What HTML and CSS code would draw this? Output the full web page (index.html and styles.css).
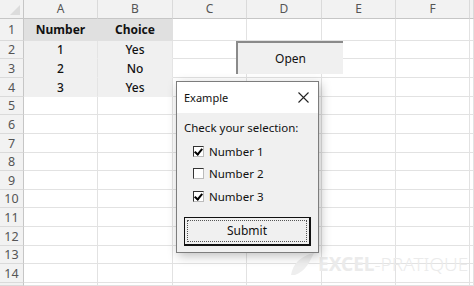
FILE: index.html
```html
<!DOCTYPE html>
<html lang="en">
<head>
  <meta charset="UTF-8" />
  <title>Example</title>
  <link rel="stylesheet" href="styles.css">
</head>
<body>
  <div class="sheet">
    <div class="corner"></div>
    <div class="col-head">A</div>
    <div class="col-head">B</div>
    <div class="col-head">C</div>
    <div class="col-head">D</div>
    <div class="col-head">E</div>
    <div class="col-head">F</div>
    <div class="col-head"></div>

    <div class="row-head">1</div>
    <div class="cell title">Number</div>
    <div class="cell title">Choice</div>
    <div class="cell"></div><div class="cell"></div><div class="cell"></div><div class="cell"></div><div class="cell"></div>

    <div class="row-head">2</div>
    <div class="cell data">1</div>
    <div class="cell data">Yes</div>
    <div class="cell"></div><div class="cell"></div><div class="cell"></div><div class="cell"></div><div class="cell"></div>

    <div class="row-head">3</div>
    <div class="cell data">2</div>
    <div class="cell data">No</div>
    <div class="cell"></div><div class="cell"></div><div class="cell"></div><div class="cell"></div><div class="cell"></div>

    <div class="row-head">4</div>
    <div class="cell data">3</div>
    <div class="cell data">Yes</div>
    <div class="cell"></div><div class="cell"></div><div class="cell"></div><div class="cell"></div><div class="cell"></div>
  </div>

  <div class="watermark">
    <svg class="wm-logo" width="28" height="24" viewBox="0 0 28 24">
      <path d="M3 23 C5 12 12 4 26 1 C22 9 18 19 7 23 Z" fill="#eeeeee"/>
    </svg>
    <span class="wm-bold">EXCEL</span><span class="wm-thin">-PRATIQUE</span>
  </div>

  <button class="open-btn">Open</button>

  <div class="dialog">
    <div class="dialog-title">
      <span>Example</span>
      <svg class="close" width="11" height="11" viewBox="0 0 11 11">
        <path d="M0.5 0.5 L10.5 10.5 M10.5 0.5 L0.5 10.5" stroke="#222" stroke-width="1.1"/>
      </svg>
    </div>
    <div class="dialog-body">
      <p class="prompt">Check your selection:</p>
      <label class="check"><span class="box checked"></span>Number 1</label>
      <label class="check"><span class="box"></span>Number 2</label>
      <label class="check"><span class="box checked"></span>Number 3</label>
      <div class="submit"><span class="focus">Submit</span></div>
    </div>
  </div>

  <script>
    // fill the empty rows 5 to 15 (row 15 is only a sliver, no label)
    const sheet = document.querySelector(".sheet");
    for (let r = 5; r <= 15; r++) {
      const head = document.createElement("div");
      head.className = "row-head";
      if (r < 15) head.textContent = r;
      sheet.appendChild(head);
      for (let c = 0; c < 7; c++) {
        const cell = document.createElement("div");
        cell.className = "cell";
        sheet.appendChild(cell);
      }
    }
  </script>
</body>
</html>
```

FILE: styles.css
```css
* { box-sizing: border-box; }

body {
  margin: 0;
  width: 474px;
  height: 286px;
  overflow: hidden;
  background: #fff;
  font-family: "Noto Sans", "Open Sans", sans-serif;
  position: relative;
}

.sheet {
  display: grid;
  grid-template-columns: 24px 74px 75px 74px 75px 74px 74px 4px;
  grid-template-rows: 19px 22px 18px 19px 19px 18px 19px 19px 18px 19px 18px 19px 19px 18px 19px 3px;
}

.corner {
  background: #f2f2f2;
  border-right: 1px solid #c6c6c6;
  border-bottom: 1px solid #c6c6c6;
  position: relative;
}

.corner::after {
  content: "";
  position: absolute;
  right: 3px;
  bottom: 3px;
  border-left: 10px solid transparent;
  border-bottom: 10px solid #dcdcdc;
}

.col-head {
  background: #f2f2f2;
  border-right: 1px solid #dadada;
  border-bottom: 1px solid #c6c6c6;
  color: #555;
  font-size: 12px;
  text-align: center;
  line-height: 18px;
}

.row-head {
  background: #f2f2f2;
  border-right: 1px solid #c6c6c6;
  border-bottom: 1px solid #dadada;
  color: #555;
  font-size: 12.5px;
  display: flex;
  align-items: center;
  justify-content: center;
}

.cell {
  border-right: 1px solid #e2e2e2;
  border-bottom: 1px solid #e2e2e2;
  display: flex;
  align-items: center;
  justify-content: center;
  font-size: 12px;
  color: #111;
}

.cell.title {
  background: #e0e0e0;
  font-weight: 700;
  border-color: #e0e0e0;
}

.cell.data {
  background: #f0f0f0;
  font-weight: 500;
  border-right-color: #e4e4e4;
  border-bottom-color: #f0f0f0;
}

.watermark {
  position: absolute;
  left: 288px;
  top: 252px;
  display: flex;
  align-items: center;
  white-space: nowrap;
  font-size: 19px;
  line-height: 22px;
  color: #ebebeb;
}

.wm-logo { margin-right: 2px; }
.wm-bold { font-weight: 700; }
.wm-thin { font-weight: 300; }

.open-btn {
  position: absolute;
  left: 236px;
  top: 41px;
  width: 107px;
  height: 33px;
  background: #f0f0f0;
  border: none;
  border-top: 2px solid #8a8a8a;
  border-left: 2px solid #8a8a8a;
  font-family: inherit;
  font-size: 12px;
  color: #111;
  padding: 0;
}

.dialog {
  position: absolute;
  left: 176px;
  top: 81px;
  width: 143px;
  height: 172px;
  background: #f0f0f0;
  border: 1px solid #7d7d7d;
  box-shadow: 2px 3px 10px rgba(0, 0, 0, 0.25);
  color: #111;
  display: flex;
  flex-direction: column;
}

.dialog-title {
  background: #fff;
  height: 31px;
  display: flex;
  align-items: center;
  justify-content: space-between;
  padding: 0 9px 0 7px;
  font-size: 11px;
}

.dialog-body {
  padding: 6px 7px 0 7px;
  display: flex;
  flex-direction: column;
}

.prompt {
  margin: 0 0 4px;
  font-size: 11.5px;
  line-height: 17px;
}

.check {
  display: flex;
  align-items: center;
  height: 22.5px;
  padding-left: 9px;
  font-size: 11.5px;
}

.box {
  width: 11px;
  height: 11px;
  background: #fff;
  border: 1px solid #333;
  border-right-color: #bbb;
  border-bottom-color: #bbb;
  margin-right: 5px;
  position: relative;
}

.box.checked::after {
  content: "";
  position: absolute;
  left: 2px;
  top: 0px;
  width: 3px;
  height: 6px;
  border-right: 2px solid #000;
  border-bottom: 2px solid #000;
  transform: rotate(40deg);
}

.submit {
  margin-top: 9px;
  width: 127px;
  height: 29px;
  border: 1px solid #111;
  border-right-width: 2px;
  border-bottom-width: 2px;
  background: #f0f0f0;
  padding: 2px;
  display: flex;
}

.focus {
  flex: 1;
  border: 1px dotted #555;
  display: flex;
  align-items: center;
  justify-content: center;
  font-size: 12px;
}
```
